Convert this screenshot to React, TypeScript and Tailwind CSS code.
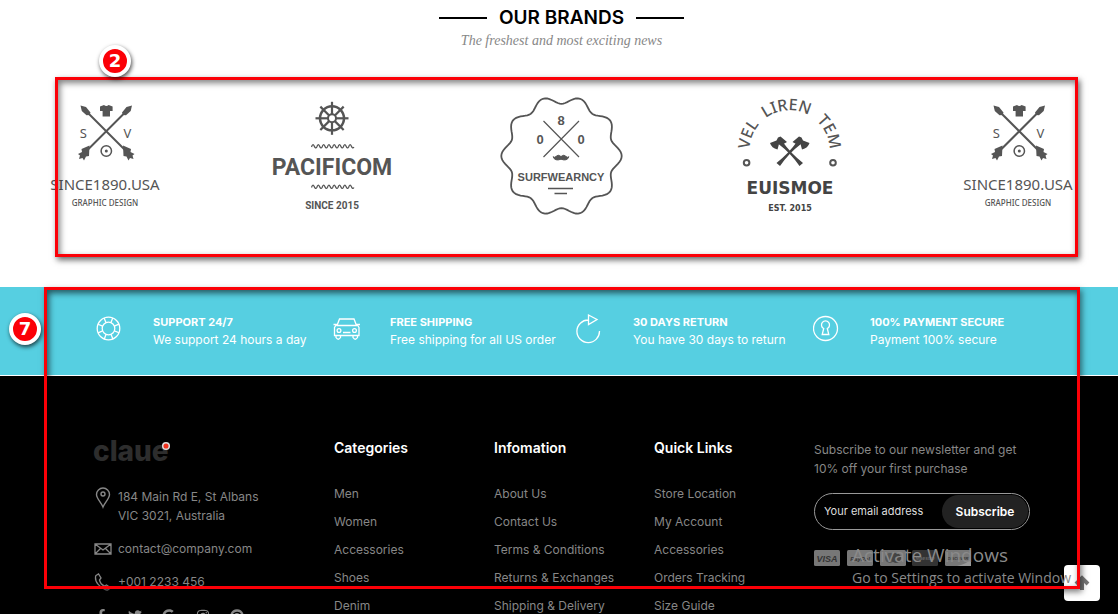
import type { ReactNode } from "react";
import { FaFacebookF, FaTwitter, FaGoogle, FaInstagram, FaPinterest } from "react-icons/fa";

const INK = "#555";

function Arrow() {
  return (
    <>
      <path d="M40 13 L86 59" stroke={INK} strokeWidth="2" />
      <path d="M36.500 9.500 l5.500 1.500 4.500 5.500 -1 2.500 -3 .3 -4.700 -4.300z" fill={INK} />
      <path d="M79 49.500 L87 53 L86.500 56 L90.500 58 L88.500 59.500 L89.500 63 L86 62 L84.500 64.500 L82.500 60.500 L79.500 60z" fill={INK} />
    </>
  );
}

function SinceLogo() {
  return (
    <svg viewBox="0 0 122 120" className="h-[120px] w-[122px] overflow-visible" fill="none" role="img" aria-label="Since 1890">
      <Arrow />
      <g transform="translate(124.500 0) scale(-1 1)">
        <Arrow />
      </g>
      <path d="M56 10.500 l4 -1.500 q2.300 2 4.600 0 l4 1.500 v4.500 h-2.600 v5.500 h-7.400 v-5.500 h-2.600z" fill={INK} />
      <circle cx="62.300" cy="55" r="5.200" stroke={INK} strokeWidth="1.500" />
      <circle cx="62.300" cy="55" r="1.500" fill={INK} />
      <g fill="#555" fontFamily="Noto Sans, sans-serif" textAnchor="middle">
        <text x="39.300" y="41.500" fontSize="13">S</text>
        <text x="83.500" y="41.500" fontSize="13">V</text>
        <text x="61" y="94" fontSize="15">SINCE1890.USA</text>
        <text x="61" y="110" fontSize="8" fontWeight="500">GRAPHIC DESIGN</text>
      </g>
    </svg>
  );
}

function PacificomLogo() {
  const spokes = [0, 45, 90, 135, 180, 225, 270, 315];
  const wave = "q1.300 -4 2.700 -1 q1.300 3.300 2.600 1";
  return (
    <svg viewBox="0 0 122 120" className="h-[120px] w-[122px] overflow-visible" fill="none" stroke={INK} role="img" aria-label="Pacificom">
      <circle cx="60" cy="22.300" r="12" strokeWidth="2.500" />
      <circle cx="60" cy="22.300" r="4" strokeWidth="2" />
      {spokes.map((a) => (
        <path key={a} d="M64 22.300 H76.500" strokeWidth="2.200" transform={`rotate(${a} 60 22.300)`} />
      ))}
      <path d={"M39.500 51 " + wave.repeat(8)} strokeWidth="1.300" />
      <path d={"M39.500 91.500 " + wave.repeat(8)} strokeWidth="1.300" />
      <g fill={INK} stroke="none" fontFamily="Roboto, sans-serif" fontWeight="700" textAnchor="middle">
        <text x="60" y="79" fontSize="23">PACIFICOM</text>
        <text x="60" y="112.500" fontSize="10">SINCE 2015</text>
      </g>
    </svg>
  );
}

const scallop =
  Array.from({ length: 181 }, (_, i) => {
    const t = (i * 2 * Math.PI) / 180;
    const r = 56.2 + 4 * Math.cos(10 * t);
    return `${i ? "L" : "M"}${(60.5 + r * Math.cos(t)).toFixed(2)} ${(60 + r * Math.sin(t)).toFixed(2)}`;
  }).join(" ") + "Z";

function SurfLogo() {
  return (
    <svg viewBox="0 0 122 120" className="h-[120px] w-[122px] overflow-visible" fill="none" stroke={INK} role="img" aria-label="Surfwearncy">
      <path d={scallop} strokeWidth="1.800" />
      <path d="M42.500 25 L78 61 M78 25 L42.500 61" strokeWidth="1.200" />
      <path d="M47 92.500 H72 M53.500 97.500 H66" strokeWidth="1.300" />
      <path d="M60 60.500 q-3 -2.500 -5 0 q-1.500 1.500 -2.800 .2 q1.500 4.800 7.800 2.500 q6.300 2.300 7.800 -2.500 q-1.300 1.300 -2.800 -.2 q-2 -2.500 -5 0z" fill={INK} />
      <g fill={INK} stroke="none" fontFamily="Liberation Sans, sans-serif" fontWeight="700" textAnchor="middle">
        <text x="60" y="29" fontSize="13">8</text>
        <text x="39" y="48" fontSize="13">0</text>
        <text x="80" y="48" fontSize="13">0</text>
        <text x="60" y="84.500" fontSize="11">SURFWEARNCY</text>
      </g>
    </svg>
  );
}

function Axe() {
  return (
    <g fill="#444">
      <path d="M68.500 45 Q60 57 47.500 67 l3.500 3 Q60 57 72 48z" />
      <path d="M63.500 46 l6.500 -5.500 2.500 1 1.500 3 6.500 2.500 q-1.500 5 -7.500 6.500 l-1.500 -5.500 -3.500 .5z" />
    </g>
  );
}

function EuismoeLogo() {
  return (
    <svg viewBox="0 0 122 120" className="h-[120px] w-[122px] overflow-visible" fill="none" role="img" aria-label="Euismoe">
      <defs>
        <path id="euismoe-arc" d="M20.600 54.300 A40 40 0 0 1 100.600 54.300" />
      </defs>
      <g fill={INK} fontFamily="Noto Sans, sans-serif" fontSize="16" fontWeight="500">
        <text><textPath href="#euismoe-arc" startOffset="1">VEL</textPath></text>
        <text><textPath href="#euismoe-arc" startOffset="37">LIREN</textPath></text>
        <text><textPath href="#euismoe-arc" startOffset="92">TEM</textPath></text>
      </g>
      <circle cx="17.600" cy="66.700" r="2.800" stroke={INK} strokeWidth="2" />
      <circle cx="104" cy="66.700" r="2.800" stroke={INK} strokeWidth="2" />
      <Axe />
      <g transform="translate(121.500 0) scale(-1 1)">
        <Axe />
      </g>
      <g fill="#444" fontFamily="DejaVu Sans, sans-serif" fontWeight="700" textAnchor="middle">
        <text x="61" y="97.500" fontSize="17">EUISMOE</text>
        <text x="61" y="115" fontSize="8">EST. 2015</text>
      </g>
    </svg>
  );
}

function LineIcon({ children }: { children: ReactNode }) {
  return (
    <svg viewBox="0 0 28 30" className="h-[30px] w-7 shrink-0" fill="none" stroke="white" strokeWidth="1.300" aria-hidden="true">
      {children}
    </svg>
  );
}

const services = [
  {
    title: "SUPPORT 24/7",
    text: "We support 24 hours a day",
    icon: (
      <LineIcon>
        <circle cx="12.500" cy="14.500" r="11.300" />
        <circle cx="12.500" cy="14.500" r="6.300" />
        {[0, 45, 90, 135, 180, 225, 270, 315].map((a) => (
          <path key={a} d="M18.800 14.500 h5" transform={`rotate(${a + 22} 12.500 14.500)`} />
        ))}
      </LineIcon>
    ),
  },
  {
    title: "FREE SHIPPING",
    text: "Free shipping for all US order",
    icon: (
      <LineIcon>
        <path d="M4 11.500 L6.500 5 h14.500 L23.500 11.500 M.5 10.500 h3 l-2 3 v8 h24.500 v-8 l-2 -3 h3 M3.500 11.500 h20.500" />
        <circle cx="6" cy="16.500" r="1.900" />
        <circle cx="21.500" cy="16.500" r="1.900" />
        <path d="M10 18.500 h7.500 M3 21.500 v2 q2.200 3.500 4.500 0 v-2 M20 21.500 v2 q2.200 3.500 4.500 0 v-2" />
      </LineIcon>
    ),
  },
  {
    title: "30 DAYS RETURN",
    text: "You have 30 days to return",
    icon: (
      <LineIcon>
        <path d="M23.500 17 A11.300 11.300 0 1 1 12.500 6 M12.500 1 L21 5.500 L12.500 10.500z" />
      </LineIcon>
    ),
  },
  {
    title: "100% PAYMENT SECURE",
    text: "Payment 100% secure",
    icon: (
      <LineIcon>
        <circle cx="12.500" cy="14.500" r="12" />
        <path d="M10.700 14.500 a4 4 0 1 1 3.600 0 L15.800 20.500 h-6.600z" />
      </LineIcon>
    ),
  },
];

const linkColumns = [
  { title: "Categories", links: ["Men", "Women", "Accessories", "Shoes", "Denim"] },
  { title: "Infomation", links: ["About Us", "Contact Us", "Terms & Conditions", "Returns & Exchanges", "Shipping & Delivery"] },
  { title: "Quick Links", links: ["Store Location", "My Account", "Accessories", "Orders Tracking", "Size Guide"] },
];

const socials = [
  { name: "Facebook", Icon: FaFacebookF },
  { name: "Twitter", Icon: FaTwitter },
  { name: "Google", Icon: FaGoogle },
  { name: "Instagram", Icon: FaInstagram },
  { name: "Pinterest", Icon: FaPinterest },
];

function Cards() {
  return (
    <svg viewBox="0 0 158 16" className="mt-5 h-4 w-[158px]" role="img" aria-label="Accepted cards">
      {[0, 33, 66, 98, 131].map((x, i) => (
        <rect key={x} x={x} width="26" height="16" rx="1.500" fill={i === 3 ? "#333" : "#777"} />
      ))}
      <g fontFamily="Liberation Sans, sans-serif" fontWeight="700" fontStyle="italic" textAnchor="middle">
        <text x="13" y="11.500" fontSize="9" fill="#333">VISA</text>
        <text x="46" y="10.500" fontSize="6" fill="#333">PayPal</text>
        <text x="111" y="10" fontSize="5" fill="#666">Maestro</text>
        <text x="144" y="10" fontSize="4" fill="#333">DISCOVER</text>
      </g>
      <circle cx="76" cy="8" r="5" fill="#555" />
      <circle cx="82" cy="8" r="5" fill="#444" />
      <path d="M157 9 v7 h-14 q10 -2 14 -7z" fill="#999" />
    </svg>
  );
}

function Badge({ children, className }: { children: ReactNode; className: string }) {
  return (
    <span
      className={`absolute flex size-8 items-center justify-center rounded-full border-4 border-white bg-[#fb0007] font-['DejaVu_Sans'] text-lg leading-none font-bold text-white shadow-[1px_2px_4px_rgba(0,0,0,0.7)] ${className}`}
    >
      {children}
    </span>
  );
}

export default function App() {
  return (
    <div className="relative h-screen overflow-hidden bg-black font-['Inter',sans-serif] text-xs">
      <section className="bg-white pt-[5px] pr-[39px] pb-[71px] pl-11">
        <div className="flex items-center justify-center gap-3">
          <span className="h-0.5 w-12 bg-black" />
          <h2 className="text-[19px] leading-[26px] font-semibold text-black">OUR BRANDS</h2>
          <span className="h-0.5 w-12 bg-black" />
        </div>
        <p className="text-center font-['Liberation_Serif',serif] text-sm leading-5 text-[#878787] italic">
          The freshest and most exciting news
        </p>
        <div className="mt-[45px] flex justify-between">
          <SinceLogo />
          <PacificomLogo />
          <SurfLogo />
          <EuismoeLogo />
          <SinceLogo />
        </div>
      </section>

      <section className="grid grid-cols-[237fr_243fr_237fr_219fr] border-b border-white bg-[#56cfe1] pt-[27px] pr-[86px] pb-[27px] pl-24 text-white">
        {services.map((s) => (
          <div key={s.title} className="flex items-start gap-[29px]">
            {s.icon}
            <div className="leading-[17px] whitespace-nowrap">
              <h3 className="text-[11px] leading-[17px] font-bold">{s.title}</h3>
              <p>{s.text}</p>
            </div>
          </div>
        ))}
      </section>

      <footer className="grid grid-cols-[minmax(0,240fr)_minmax(0,160fr)_minmax(0,160fr)_minmax(0,160fr)_minmax(0,216fr)] bg-black pt-[62px] pr-[88px] pb-10 pl-[94px] text-[#878787]">
        <div>
          <a href="#home" aria-label="claue" className="block">
            <svg viewBox="0 0 80 25" className="h-[25px] w-20 overflow-visible">
              <text x="-1" y="23" fontFamily="Inter, sans-serif" fontSize="28" fontWeight="800" fill="#2d2d2d">claue</text>
              <circle cx="72" cy="8" r="3.300" fill="#f0321e" stroke="#ddd" strokeWidth="1.500" />
            </svg>
          </a>
          <address className="mt-6 flex flex-col gap-3.5 leading-[19px] not-italic">
            <div className="flex gap-1.5">
              <svg viewBox="0 0 18 22" className="h-[22px] w-[18px]" fill="none" stroke="currentColor" strokeWidth="1.400" aria-hidden="true">
                <path d="M9 20 C7 15 2.500 11.500 2.500 7.500 a6.500 6.500 0 0 1 13 0 C15.500 11.500 11 15 9 20z" />
                <circle cx="9" cy="7" r="2" />
              </svg>
              <p>184 Main Rd E, St Albans<br />VIC 3021, Australia</p>
            </div>
            <div className="flex items-center gap-1.5">
              <svg viewBox="0 0 18 12" className="h-3 w-[18px]" fill="none" stroke="currentColor" strokeWidth="1.300" aria-hidden="true">
                <path d="M1 1 h16 v10 H1z M1 1 l8 6 8 -6 M1 11 l5.500 -5.500 M17 11 l-5.500 -5.500" />
              </svg>
              <a href="mailto:contact@company.com">contact@company.com</a>
            </div>
            <div className="flex items-center gap-1.5">
              <svg viewBox="0 0 18 18" className="size-[18px]" fill="none" stroke="currentColor" strokeWidth="1.300" aria-hidden="true">
                <path d="M2 2.500 L4.500 1 L7 5 L5.500 7 C6 9.500 8 12 10.500 13 L12.500 12 L16 14.500 C15 17 13 17.500 11 16.500 C6 14.500 1 9 1.500 4.500 Q1.500 3 2 2.500z" />
              </svg>
              <a href="tel:+0012233456">+001 2233 456</a>
            </div>
          </address>
          <div className="mt-[18px] flex gap-5">
            {socials.map(({ name, Icon }) => (
              <a key={name} href={`#${name}`} aria-label={name}>
                <Icon className="size-3.5" />
              </a>
            ))}
          </div>
        </div>

        {linkColumns.map((c) => (
          <nav key={c.title} aria-label={c.title} className="whitespace-nowrap">
            <h3 className="text-sm leading-5 font-semibold text-white">{c.title}</h3>
            <ul className="mt-[22px] leading-7">
              {c.links.map((l) => (
                <li key={l}>
                  <a href="#links">{l}</a>
                </li>
              ))}
            </ul>
          </nav>
        ))}

        <div>
          <p className="pt-0.5 leading-[19px]">
            Subscribe to our newsletter and get
            <br />
            10% off your first purchase
          </p>
          <form className="mt-[15px] flex h-[37px] rounded-full border border-[#999] p-px" onSubmit={(e) => e.preventDefault()}>
            <input
              type="email"
              aria-label="Your email address"
              placeholder="Your email address"
              className="w-0 min-w-0 flex-1 bg-transparent pl-2 text-[11px] text-white outline-none placeholder:text-[#ddd]"
            />
            <button type="submit" className="w-[86px] rounded-full bg-[#222] text-xs font-semibold text-white">
              Subscribe
            </button>
          </form>
          <Cards />
        </div>
      </footer>

      <button type="button" aria-label="Back to top" className="absolute top-[565px] right-[18px] flex size-9 items-center justify-center rounded-sm bg-white">
        <svg viewBox="0 0 20 20" className="size-5" fill="none" stroke="#777" strokeWidth="4" aria-hidden="true">
          <path d="M4 11 L10 5 L16 11 M10 6 V17" />
        </svg>
      </button>
      <div className="pointer-events-none absolute top-[543px] right-[36px] w-[230px] font-['Open_Sans',sans-serif] whitespace-nowrap text-[#8a8a8a]">
        <p className="text-[19px] leading-6">Activate Windows</p>
        <p className="text-sm leading-[22px]">Go to Settings to activate Window</p>
      </div>

      <div className="pointer-events-none absolute top-[77px] right-10 left-[55px] h-[180px] border-3 border-[#fb0007] shadow-[2px_3px_6px_rgba(0,0,0,0.6),inset_2px_3px_6px_rgba(0,0,0,0.5)]" />
      <div className="pointer-events-none absolute top-[287px] right-[38px] left-11 h-[302px] border-3 border-[#fb0007] shadow-[2px_3px_6px_rgba(0,0,0,0.5),inset_2px_3px_6px_rgba(0,0,0,0.6)]" />
      <Badge className="top-[45px] left-[99px]">2</Badge>
      <Badge className="top-[313px] left-[9px]">7</Badge>
    </div>
  );
}
